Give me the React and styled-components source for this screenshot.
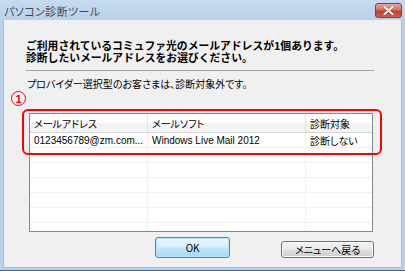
import React from "react";
import styled, { createGlobalStyle } from "styled-components";

/* ---------- Global ---------- */

const GlobalStyle = createGlobalStyle`
  html, body {
    margin: 0;
    padding: 0;
    background: #ffffff;
  }
  body {
    font-family: "Liberation Sans", "Noto Sans CJK JP", sans-serif;
    font-feature-settings: "palt";
  }
`;

/* ---------- Window frame ---------- */

const Window = styled.div`
  width: 405px;
  height: 271px;
  box-sizing: border-box;
  background: linear-gradient(#c6daef, #b9d1ea 20px, #b9d1ea);
  border-bottom: 1px solid #3d6b9a;
  display: flex;
  flex-direction: column;
  overflow: hidden;
`;

const TitleBar = styled.div`
  height: 20px;
  flex: none;
  display: flex;
  align-items: center;
  justify-content: space-between;
  padding: 0 3px 0 4px;
`;

const Title = styled.div`
  font-family: "Noto Sans CJK JP", sans-serif;
  font-size: 11px;
  color: #4a4a4a;
  letter-spacing: 0.4px;
  margin-top: 1px;
`;

const CloseButton = styled.div`
  width: 25px;
  height: 13px;
  margin-top: 1px;
  border: 1px solid #8e3b2f;
  border-radius: 3px;
  background: linear-gradient(#e7a79c, #d5705f 45%, #c0412c 55%, #d0624d);
  display: flex;
  align-items: center;
  justify-content: center;
`;

const Client = styled.div`
  flex: 1;
  margin: 0 3px 2px 3px;
  background: #f0f0f0;
  border: 1px solid #a9bfd6;
  border-width: 0 1px 1px 1px;
  display: flex;
  flex-direction: column;
  padding: 20px 27px 0 22px;
`;

/* ---------- Messages ---------- */

const Heading = styled.div`
  display: flex;
  flex-direction: column;
`;

const HeadingLine = styled.div`
  height: 11.5px;
  display: flex;
  align-items: center;
  font-family: "Noto Sans CJK JP", sans-serif;
  font-feature-settings: normal;
  font-size: 10.8px;
  line-height: 11.5px;
  font-weight: 700;
  color: #000;
  white-space: nowrap;
`;

const Separator = styled.div`
  height: 1px;
  background: #a0a0a0;
  margin-top: 7px;
`;

const Note = styled.div`
  font-family: "Noto Sans CJK JP", sans-serif;
  font-size: 10px;
  line-height: 12px;
  color: #000;
  margin-top: 7px;
  padding-left: 1px;
`;

/* ---------- List view ---------- */

const ListArea = styled.div`
  position: relative;
  margin: 23px 1px 0 3px;
`;

const Marker = styled.div`
  position: absolute;
  left: -18px;
  top: -22px;
  width: 13px;
  height: 13px;
  border: 1.5px solid #e60012;
  border-radius: 50%;
  color: #e60012;
  font-family: "Liberation Sans", sans-serif;
  font-weight: 700;
  font-size: 11px;
  display: flex;
  align-items: center;
  justify-content: center;
`;

const Highlight = styled.div`
  position: absolute;
  left: -7px;
  top: -4px;
  width: 360px;
  height: 46px;
  box-sizing: border-box;
  border: 2px solid #f00;
  border-radius: 6px;
  pointer-events: none;
`;

const List = styled.div`
  height: 119px;
  box-sizing: border-box;
  border: 1px solid #828790;
  background: #fff;
  overflow: hidden;
`;

const Row = styled.div`
  display: grid;
  grid-template-columns: 118px 158px 1fr;
  height: ${({ $head }) => ($head ? "18px" : "14px")};
  background: ${({ $head }) =>
    $head ? "linear-gradient(#ffffff, #ffffff 45%, #f1f2f4 55%, #f3f4f6)" : "#fff"};
  border-bottom: 1px solid ${({ $head }) => ($head ? "#d5d5d5" : "#f0f0f0")};
`;

const Cell = styled.div`
  display: flex;
  align-items: center;
  padding-left: 4px;
  font-size: 10px;
  color: #000;
  white-space: nowrap;
  overflow: hidden;
  border-right: 1px solid ${({ $head }) => ($head ? "#e3e4e6" : "#f0f0f0")};
  &:last-child {
    border-right: none;
  }
`;

/* ---------- Buttons ---------- */

const ButtonRow = styled.div`
  display: flex;
  align-items: flex-end;
  margin-top: 5px;
  padding-left: 129px;
  gap: 51px;
`;

const Button = styled.div`
  box-sizing: border-box;
  width: ${({ $primary }) => ($primary ? "82px" : "101px")};
  height: ${({ $primary }) => ($primary ? "21px" : "17px")};
  border: 1px solid ${({ $primary }) => ($primary ? "#3c8cc8" : "#707070")};
  border-radius: 3px;
  background: ${({ $primary }) =>
    $primary
      ? "linear-gradient(#eaf6fd, #d9f0fc 45%, #bee6fd 55%, #a7d9f5)"
      : "linear-gradient(#f2f2f2, #ebebeb 45%, #dddddd 55%, #cfcfcf)"};
  box-shadow: ${({ $primary }) => ($primary ? "inset 0 0 0 1px #b8e3fa" : "inset 0 0 0 1px #fcfcfc")};
  display: flex;
  align-items: center;
  justify-content: center;
  font-family: "Noto Sans CJK JP", sans-serif;
  font-size: 10px;
  color: #000;
`;

/* ---------- Component ---------- */

const columns = ["メールアドレス", "メールソフト", "診断対象"];
const rows = [["0123456789@zm.com...", "Windows Live Mail 2012", "診断しない"]];
const emptyRows = 6;

const App = () => (
  <>
    <GlobalStyle />
    <Window>
      <TitleBar>
        <Title>パソコン診断ツール</Title>
        <CloseButton>
          <svg width="11" height="9" viewBox="0 0 11 9">
            <path d="M1.5 1 L9.5 8 M9.5 1 L1.5 8" stroke="#5a1a12" strokeWidth="3" strokeLinecap="round" opacity="0.35" />
            <path d="M1.5 1 L9.5 8 M9.5 1 L1.5 8" stroke="#fff" strokeWidth="2" strokeLinecap="round" />
          </svg>
        </CloseButton>
      </TitleBar>

      <Client>
        <Heading>
          <HeadingLine>ご利用されているコミュファ光のメールアドレスが1個あります。</HeadingLine>
          <HeadingLine>診断したいメールアドレスをお選びください。</HeadingLine>
        </Heading>
        <Separator />
        <Note>プロバイダー選択型のお客さまは、診断対象外です。</Note>

        <ListArea>
          <Marker>1</Marker>
          <List>
            <Row $head>
              {columns.map((c) => (
                <Cell $head key={c}>{c}</Cell>
              ))}
            </Row>
            {rows.map((r, i) => (
              <Row key={i}>
                {r.map((c, j) => (
                  <Cell key={j}>{c}</Cell>
                ))}
              </Row>
            ))}
            {Array.from({ length: emptyRows }).map((_, i) => (
              <Row key={"e" + i}>
                <Cell />
                <Cell />
                <Cell />
              </Row>
            ))}
          </List>
          <Highlight />
        </ListArea>

        <ButtonRow>
          <Button $primary>OK</Button>
          <Button>メニューへ戻る</Button>
        </ButtonRow>
      </Client>
    </Window>
  </>
);

export default App;
